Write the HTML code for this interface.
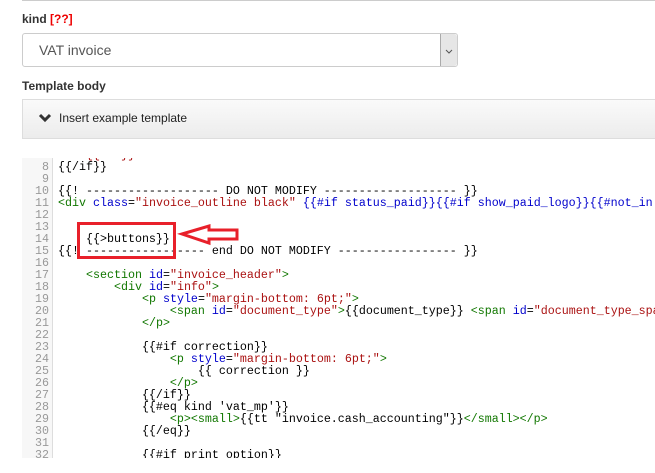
<!DOCTYPE html>
<html><head><meta charset="utf-8"><style>
body{margin:0;width:655px;height:473px;overflow:hidden;background:#fff;font-family:"Liberation Sans",Arial,sans-serif;position:relative}
.topline{position:absolute;left:22px;top:0;right:0;height:1px;background:#ccc}
.lbl{position:absolute;left:22px;font-size:12px;font-weight:bold;color:#333}
.sel{position:absolute;left:22px;top:33px;width:434px;height:32px;border:1px solid #ccc;border-radius:3px;background:#fff}
.sel span{position:absolute;left:16px;top:8px;font-size:14px;color:#555}
.sel .btn{position:absolute;right:0;top:0;width:16px;height:32px;background:#e6e6e6;border-left:1px solid #aaa;border-radius:0 3px 3px 0}
.acc{position:absolute;left:22px;top:99px;right:0;height:38px;border:1px solid #ddd;border-right:none;background:linear-gradient(#fafafa,#ececec)}
.acc span{position:absolute;left:36px;top:11px;font-size:12px;color:#222}
.gut{position:absolute;left:22px;top:158px;width:30px;height:300px;background:#f7f7f7;border-right:1px solid #ddd}
.code{position:absolute;left:22px;top:149px;width:633px;height:309px;overflow:hidden;clip-path:inset(9px 0 0 0)}
.ln{position:absolute;left:0;width:27px;text-align:right;color:#999}
pre{margin:0;font-family:"Liberation Mono","Courier New",monospace;font-size:11.67px;line-height:12px}
.c{position:absolute;left:36px;color:#000;white-space:pre}
.t{color:#170}.a{color:#00c}.s{color:#a11}.b{color:#00c}
</style></head><body>
<div class="topline"></div>
<div class="lbl" style="top:12px">kind <span style="color:#e00">[??]</span></div>
<div class="sel"><span>VAT invoice</span><div class="btn"><svg width="16" height="32"><path d="M5 16l3 3 3-3" fill="none" stroke="#555" stroke-width="1"/></svg></div></div>
<div class="lbl" style="top:79px">Template body</div>
<div class="acc"><svg style="position:absolute;left:15px;top:13px" width="14" height="10"><path d="M2 2l5 5 5-5" fill="none" stroke="#333" stroke-width="3"/></svg><span>Insert example template</span></div>
<div class="gut"></div>
<div class="code"><pre>
<div class="ln" style="top:0">7</div><div class="c" style="top:0"><span class="s">    {{/if}}</span></div>
<div class="ln" style="top:12px">8</div><div class="c" style="top:12px">{{/if}}</div>
<div class="ln" style="top:24px">9</div>
<div class="ln" style="top:36px">10</div><div class="c" style="top:36px">{{! ------------------- DO NOT MODIFY ------------------- }}</div>
<div class="ln" style="top:48px">11</div><div class="c" style="top:48px"><span class="t">&lt;div</span> <span class="a">class</span>=<span class="s">"invoice_outline black"</span> <span class="b">{{#if status_paid}}{{#if show_paid_logo}}{{#not_in</span></div>
<div class="ln" style="top:60px">12</div>
<div class="ln" style="top:72px">13</div>
<div class="ln" style="top:84px">14</div><div class="c" style="top:84px">    {{&gt;buttons}}</div>
<div class="ln" style="top:96px">15</div><div class="c" style="top:96px">{{! ----------------- end DO NOT MODIFY ----------------- }}</div>
<div class="ln" style="top:108px">16</div>
<div class="ln" style="top:120px">17</div><div class="c" style="top:120px">    <span class="t">&lt;section</span> <span class="a">id</span>=<span class="s">"invoice_header"</span><span class="t">&gt;</span></div>
<div class="ln" style="top:132px">18</div><div class="c" style="top:132px">        <span class="t">&lt;div</span> <span class="a">id</span>=<span class="s">"info"</span><span class="t">&gt;</span></div>
<div class="ln" style="top:144px">19</div><div class="c" style="top:144px">            <span class="t">&lt;p</span> <span class="a">style</span>=<span class="s">"margin-bottom: 6pt;"</span><span class="t">&gt;</span></div>
<div class="ln" style="top:156px">20</div><div class="c" style="top:156px">                <span class="t">&lt;span</span> <span class="a">id</span>=<span class="s">"document_type"</span><span class="t">&gt;</span>{{document_type}} <span class="t">&lt;span</span> <span class="a">id</span>=<span class="s">"document_type_spa</span></div>
<div class="ln" style="top:168px">21</div><div class="c" style="top:168px">            <span class="t">&lt;/p&gt;</span></div>
<div class="ln" style="top:180px">22</div>
<div class="ln" style="top:192px">23</div><div class="c" style="top:192px">            {{#if correction}}</div>
<div class="ln" style="top:204px">24</div><div class="c" style="top:204px">                <span class="t">&lt;p</span> <span class="a">style</span>=<span class="s">"margin-bottom: 6pt;"</span><span class="t">&gt;</span></div>
<div class="ln" style="top:216px">25</div><div class="c" style="top:216px">                    {{ correction }}</div>
<div class="ln" style="top:228px">26</div><div class="c" style="top:228px">                <span class="t">&lt;/p&gt;</span></div>
<div class="ln" style="top:240px">27</div><div class="c" style="top:240px">            {{/if}}</div>
<div class="ln" style="top:252px">28</div><div class="c" style="top:252px">            {{#eq kind 'vat_mp'}}</div>
<div class="ln" style="top:264px">29</div><div class="c" style="top:264px">                <span class="t">&lt;p&gt;&lt;small&gt;</span>{{tt "invoice.cash_accounting"}}<span class="t">&lt;/small&gt;&lt;/p&gt;</span></div>
<div class="ln" style="top:276px">30</div><div class="c" style="top:276px">            {{/eq}}</div>
<div class="ln" style="top:288px">31</div>
<div class="ln" style="top:300px">32</div><div class="c" style="top:300px">            {{#if print_option}}</div>
</pre></div>
<div style="position:absolute;left:77px;top:222px;width:93px;height:31px;border:3px solid #e8202a"></div>
<svg style="position:absolute;left:0;top:0" width="655" height="473"><polygon points="182,234 209,226 209,230 237,230 237,239 209,239 209,243" fill="#fff" stroke="#e8202a" stroke-width="3"/></svg>
</body></html>
